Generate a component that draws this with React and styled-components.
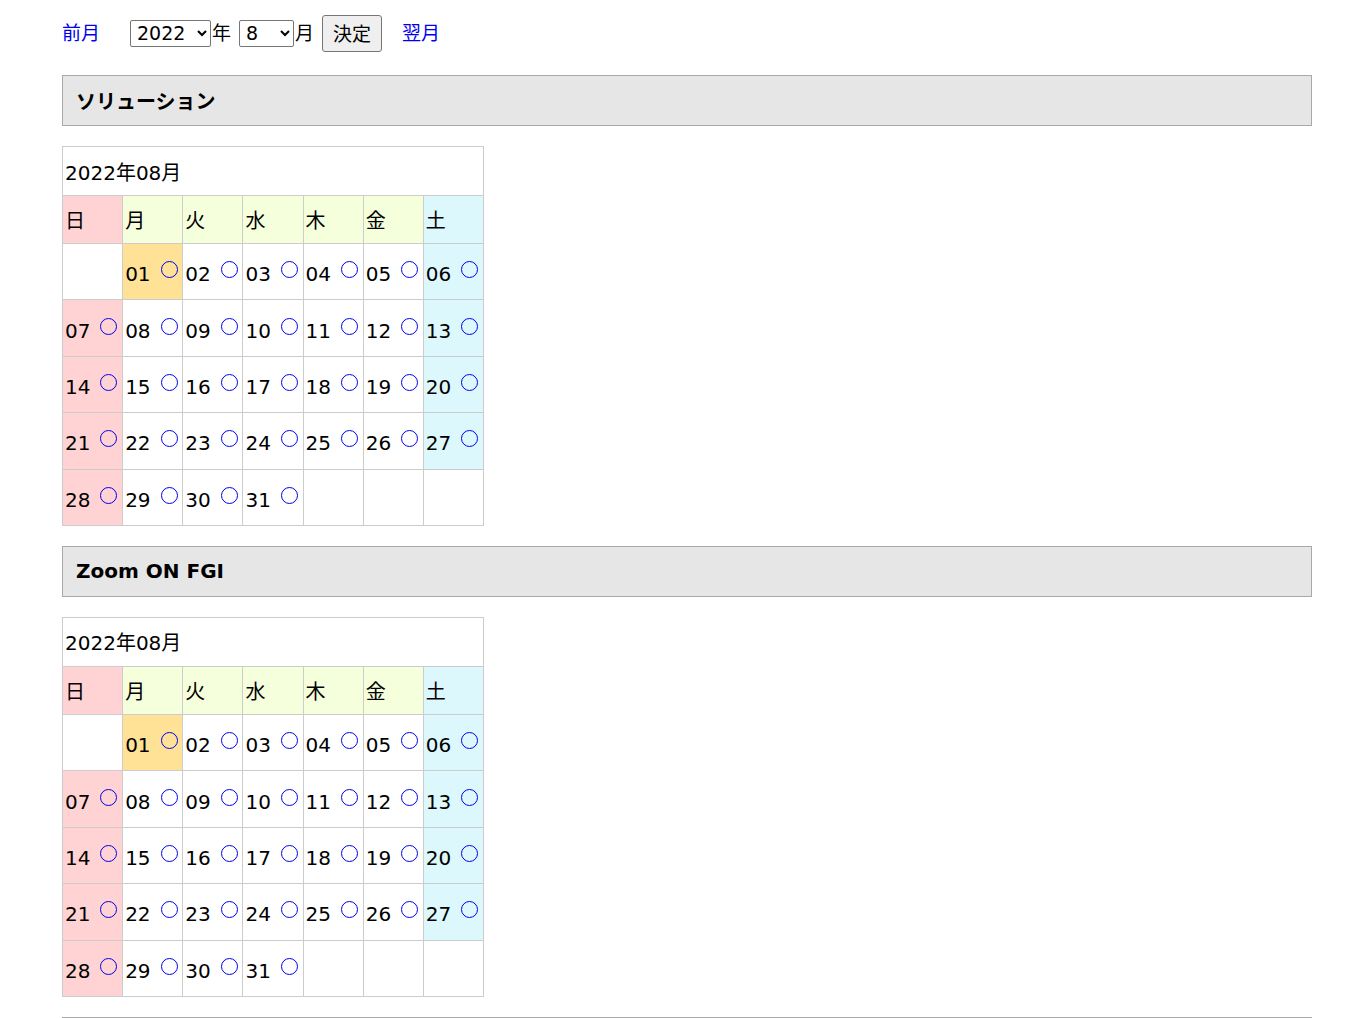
import React from 'react';
import styled, { createGlobalStyle } from 'styled-components';

const GlobalStyle = createGlobalStyle`
  body {
    margin: 0;
    background: #fff;
    color: #000;
    font-family: "DejaVu Sans", "Noto Sans CJK JP", sans-serif;
  }
`;

const Page = styled.div`
  padding: 15px 38px 0 62px;
`;

const Nav = styled.div`
  display: flex;
  align-items: center;
  height: 37px;
  font-family: "Noto Sans CJK JP", sans-serif;
  font-size: 19px;
  line-height: 1;
`;

const NavLink = styled.a`
  color: #0000ee;
  text-decoration: none;
  margin-right: ${(props) => props.gap || 0}px;
  margin-bottom: 4px;
  cursor: pointer;
`;

const Select = styled.select`
  width: ${(props) => props.width}px;
  height: 27px;
  margin-right: 1px;
  margin-bottom: 1px;
  font-family: "DejaVu Sans", sans-serif;
  font-size: 19px;
  border: 1px solid #767676;
  border-radius: 2px;
  background: #fff;
  color: #000;
  padding: 0 2px;
`;

const Unit = styled.span`
  margin-right: 8px;
  margin-bottom: 4px;
`;

const Button = styled.button`
  height: 37px;
  width: 60px;
  margin-right: 20px;
  padding: 0 0 3px;
  font-family: "Noto Sans CJK JP", sans-serif;
  font-size: 19px;
  background: #efefef;
  border: 1px solid #767676;
  border-radius: 3px;
  color: #000;
`;

const Section = styled.section`
  margin-top: ${(props) => props.top}px;
`;

const Heading = styled.h2`
  margin: 0;
  height: 49px;
  display: flex;
  align-items: center;
  padding-left: 13px;
  background: #e6e6e6;
  border: 1px solid #a9a9a9;
  font-size: 20px;
  font-weight: bold;
  font-family: "DejaVu Sans", "Noto Sans CJK JP", sans-serif;
`;

const Calendar = styled.table`
  margin-top: 20px;
  border-collapse: collapse;
  width: 422px;
  table-layout: fixed;
  font-size: 20px;
`;

const Caption = styled.td`
  height: 48px;
  border: 1px solid #ccc;
  padding: 0 2px;
  background: #fff;
`;

const HeadCell = styled.td`
  height: 47px;
  border: 1px solid #ccc;
  padding: 0 2px;
  background: ${(props) => props.bg};
  font-family: "Noto Sans CJK JP", sans-serif;
`;

const DayCell = styled.td`
  height: 51.4px;
  border: 1px solid #ccc;
  padding: 4px 2px 0;
  background: ${(props) => props.bg || '#fff'};
  white-space: nowrap;
  vertical-align: middle;
  line-height: 24px;
`;

const Mark = styled.a`
  display: inline-block;
  margin-left: 10px;
  width: 17px;
  height: 17px;
  box-sizing: border-box;
  border: 1.7px solid #0000ee;
  border-radius: 50%;
  vertical-align: 3px;
`;

const colors = {
  sun: '#ffd3d3',
  week: '#f6ffdc',
  sat: '#ddf8fd',
  today: '#ffe296',
};

const weekdays = ['日', '月', '火', '水', '木', '金', '土'];

const buildWeeks = () => {
  // 2022-08-01 is a Monday
  const cells = [null];
  for (let d = 1; d <= 31; d += 1) cells.push(d);
  while (cells.length % 7) cells.push(null);
  const weeks = [];
  for (let i = 0; i < cells.length; i += 7) weeks.push(cells.slice(i, i + 7));
  return weeks;
};

const weeks = buildWeeks();

const cellColor = (day, col) => {
  if (!day) return null;
  if (day === 1) return colors.today;
  if (col === 0) return colors.sun;
  if (col === 6) return colors.sat;
  return null;
};

const MonthTable = () => (
  <Calendar>
    <tbody>
      <tr>
        <Caption colSpan={7}>2022年08月</Caption>
      </tr>
      <tr>
        {weekdays.map((w, i) => (
          <HeadCell key={w} bg={i === 0 ? colors.sun : i === 6 ? colors.sat : colors.week}>
            {w}
          </HeadCell>
        ))}
      </tr>
      {weeks.map((week, wi) => (
        <tr key={wi}>
          {week.map((day, col) => (
            <DayCell key={col} bg={cellColor(day, col)}>
              {day && (
                <>
                  {String(day).padStart(2, '0')}
                  <Mark title="○" />
                </>
              )}
            </DayCell>
          ))}
        </tr>
      ))}
    </tbody>
  </Calendar>
);

const App = () => (
  <>
    <GlobalStyle />
    <Page>
      <Nav>
        <NavLink gap={30}>前月</NavLink>
        <Select width={81} defaultValue="2022">
          <option>2021</option>
          <option>2022</option>
          <option>2023</option>
        </Select>
        <Unit>年</Unit>
        <Select width={55} defaultValue="8">
          {Array.from({ length: 12 }, (_, i) => (
            <option key={i}>{i + 1}</option>
          ))}
        </Select>
        <Unit>月</Unit>
        <Button>決定</Button>
        <NavLink>翌月</NavLink>
      </Nav>
      <Section top={23}>
        <Heading>ソリューション</Heading>
        <MonthTable />
      </Section>
      <Section top={20}>
        <Heading>Zoom ON FGI</Heading>
        <MonthTable />
      </Section>
      <Section top={20}>
        <Heading />
      </Section>
    </Page>
  </>
);

export default App;
